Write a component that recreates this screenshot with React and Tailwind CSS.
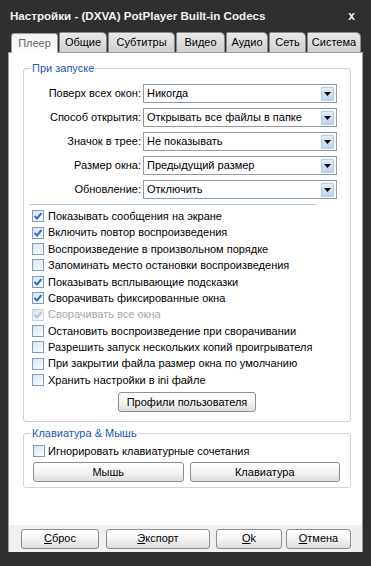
import React from 'react';

const font = { fontFamily: '"Liberation Sans", Arial, sans-serif' };

const tabs = [
  { name: 'Плеер', w: 'w-[47px]', active: true },
  { name: 'Общие', w: 'w-[48px]' },
  { name: 'Субтитры', w: 'w-[67px]' },
  { name: 'Видео', w: 'w-[49px]' },
  { name: 'Аудио', w: 'w-[42px]' },
  { name: 'Сеть', w: 'w-[37px]' },
  { name: 'Система', w: 'w-[54px]' },
];

const selects = [
  ['Поверх всех окон:', 'Никогда'],
  ['Способ открытия:', 'Открывать все файлы в папке'],
  ['Значок в трее:', 'Не показывать'],
  ['Размер окна:', 'Предыдущий размер'],
  ['Обновление:', 'Отключить'],
];

const checks = [
  ['Показывать сообщения на экране', true],
  ['Включить повтор воспроизведения', true],
  ['Воспроизведение в произвольном порядке', false],
  ['Запоминать место остановки воспроизведения', false],
  ['Показывать всплывающие подсказки', true],
  ['Сворачивать фиксированные окна', true],
  ['Сворачивать все окна', true, true],
  ['Остановить воспроизведение при сворачивании', false],
  ['Разрешить запуск нескольких копий проигрывателя', false],
  ['При закрытии файла размер окна по умолчанию', false],
  ['Хранить настройки в ini файле', false],
];

const CheckBox = ({ checked, disabled }) => (
  <span
    className={`w-[12px] h-[12px] shrink-0 border flex items-center justify-center bg-gradient-to-br from-[#d9e3ee] to-[#fbfcfe] ${
      disabled ? 'border-[#c5d2df]' : 'border-[#7f9db9]'
    }`}
  >
    {checked && (
      <svg width="10" height="10" viewBox="0 0 10 10">
        <path
          d="M1.5 5 L4 7.5 L8.5 2"
          fill="none"
          stroke={disabled ? '#b5c6d8' : '#2b6fcf'}
          strokeWidth="2"
        />
      </svg>
    )}
  </span>
);

const Button = ({ className = '', children }) => (
  <button
    className={`h-[20px] rounded-[3px] border border-[#8e8e8e] bg-gradient-to-b from-white via-[#f4f4f4] to-[#dcdcdc] text-[11px] text-black leading-none ${className}`}
  >
    {children}
  </button>
);

const Legend = ({ children }) => (
  <legend className="ml-[7px] px-[1px] text-[11px] leading-[13px] text-[#1d55b8]">{children}</legend>
);

export default function App() {
  return (
    <div className="w-[371px] h-[566px] bg-[#2f2f2f] flex flex-col overflow-hidden" style={font}>
      {/* title bar */}
      <div className="h-[31px] shrink-0 flex items-center justify-between pl-[10px] pr-[16px]">
        <span className="text-[11.6px] font-bold text-[#f2f2f2]">
          Настройки - (DXVA) PotPlayer Built-in Codecs
        </span>
        <span className="text-[12px] font-bold text-[#f2f2f2]">x</span>
      </div>

      {/* tabs */}
      <div className="h-[21px] shrink-0 flex items-end gap-[1px] pl-[11px] relative z-10">
        {tabs.map((t) =>
          t.active ? (
            <div
              key={t.name}
              className={`${t.w} h-[20px] mb-[-1px] rounded-t-[3px] border border-b-0 border-[#9c9c9c] bg-gradient-to-b from-[#f2f2f2] to-white flex items-center justify-center text-[11px] text-[#666]`}
            >
              {t.name}
            </div>
          ) : (
            <div
              key={t.name}
              className={`${t.w} h-[20px] rounded-tl-[2px] rounded-tr-[5px] border border-b-0 border-[#8a8a8a] bg-gradient-to-b from-[#eaeaea] to-[#cfcfcf] flex items-center justify-center text-[11px] text-black`}
            >
              {t.name}
            </div>
          )
        )}
      </div>

      {/* panel */}
      <div className="mx-[8px] flex-1 flex flex-col border-x border-t border-[#9c9c9c] bg-white">
        <fieldset className="mt-[9px] ml-[14px] mr-[11px] border border-[#d3d3d3] rounded-[3px] pb-[9px]">
          <Legend>При запуске</Legend>
          <div className="pt-[9px] flex flex-col gap-[5px]">
            {selects.map(([label, value]) => (
              <div key={label} className="flex items-center h-[19px]">
                <span className="w-[119px] pr-[2px] text-right text-[11px] text-black">{label}</span>
                <div className="w-[194px] h-[19px] border border-[#8e9aa8] flex items-center justify-between pl-[3px] pr-[2px]">
                  <span className="text-[11px] text-black">{value}</span>
                  <span className="w-[13px] h-[14px] border border-[#b7cbe6] bg-gradient-to-b from-[#e4eefb] to-[#bcd3f1] flex items-center justify-center">
                    <svg width="7" height="4" viewBox="0 0 7 4">
                      <path d="M0 0 H7 L3.5 4 Z" fill="#000" />
                    </svg>
                  </span>
                </div>
              </div>
            ))}
          </div>

          <div className="mt-[5px] ml-[6px] w-[286px] h-[1px] bg-[#a9c4dc]" />

          <div className="mt-[3px] flex flex-col">
            {checks.map(([label, checked, disabled]) => (
              <div key={label} className="h-[16.4px] flex items-center pl-[8px] gap-[4px]">
                <CheckBox checked={checked} disabled={disabled} />
                <span className={`text-[11px] ${disabled ? 'text-[#a6a6a6]' : 'text-black'}`}>{label}</span>
              </div>
            ))}
          </div>

          <div className="mt-[4px] flex justify-center">
            <Button className="w-[138px]">Профили пользователя</Button>
          </div>
        </fieldset>

        <fieldset className="mt-[5px] ml-[14px] mr-[11px] border border-[#d3d3d3] rounded-[3px] pb-[5px]">
          <Legend>Клавиатура &amp; Мышь</Legend>
          <div className="pt-[3px] h-[19px] flex items-center pl-[9px] gap-[3px]">
            <CheckBox checked={false} />
            <span className="text-[11px] text-black">Игнорировать клавиатурные сочетания</span>
          </div>
          <div className="mt-[3px] flex gap-[6px] pl-[9px] pr-[10px]">
            <Button className="flex-1">Мышь</Button>
            <Button className="flex-1">Клавиатура</Button>
          </div>
        </fieldset>

        <div className="flex-1" />

        {/* bottom buttons */}
        <div className="h-[27px] bg-[#efefef] flex items-center">
          <Button className="ml-[12px] w-[78px]">
            <span className="underline">С</span>брос
          </Button>
          <Button className="ml-[7px] w-[104px]">
            <span className="underline">Э</span>кспорт
          </Button>
          <Button className="ml-[6px] w-[66px]">
            <span className="underline">O</span>k
          </Button>
          <Button className="ml-[4px] w-[65px]">
            <span className="underline">О</span>тмена
          </Button>
        </div>
      </div>
      <div className="h-[14px] shrink-0" />
    </div>
  );
}
